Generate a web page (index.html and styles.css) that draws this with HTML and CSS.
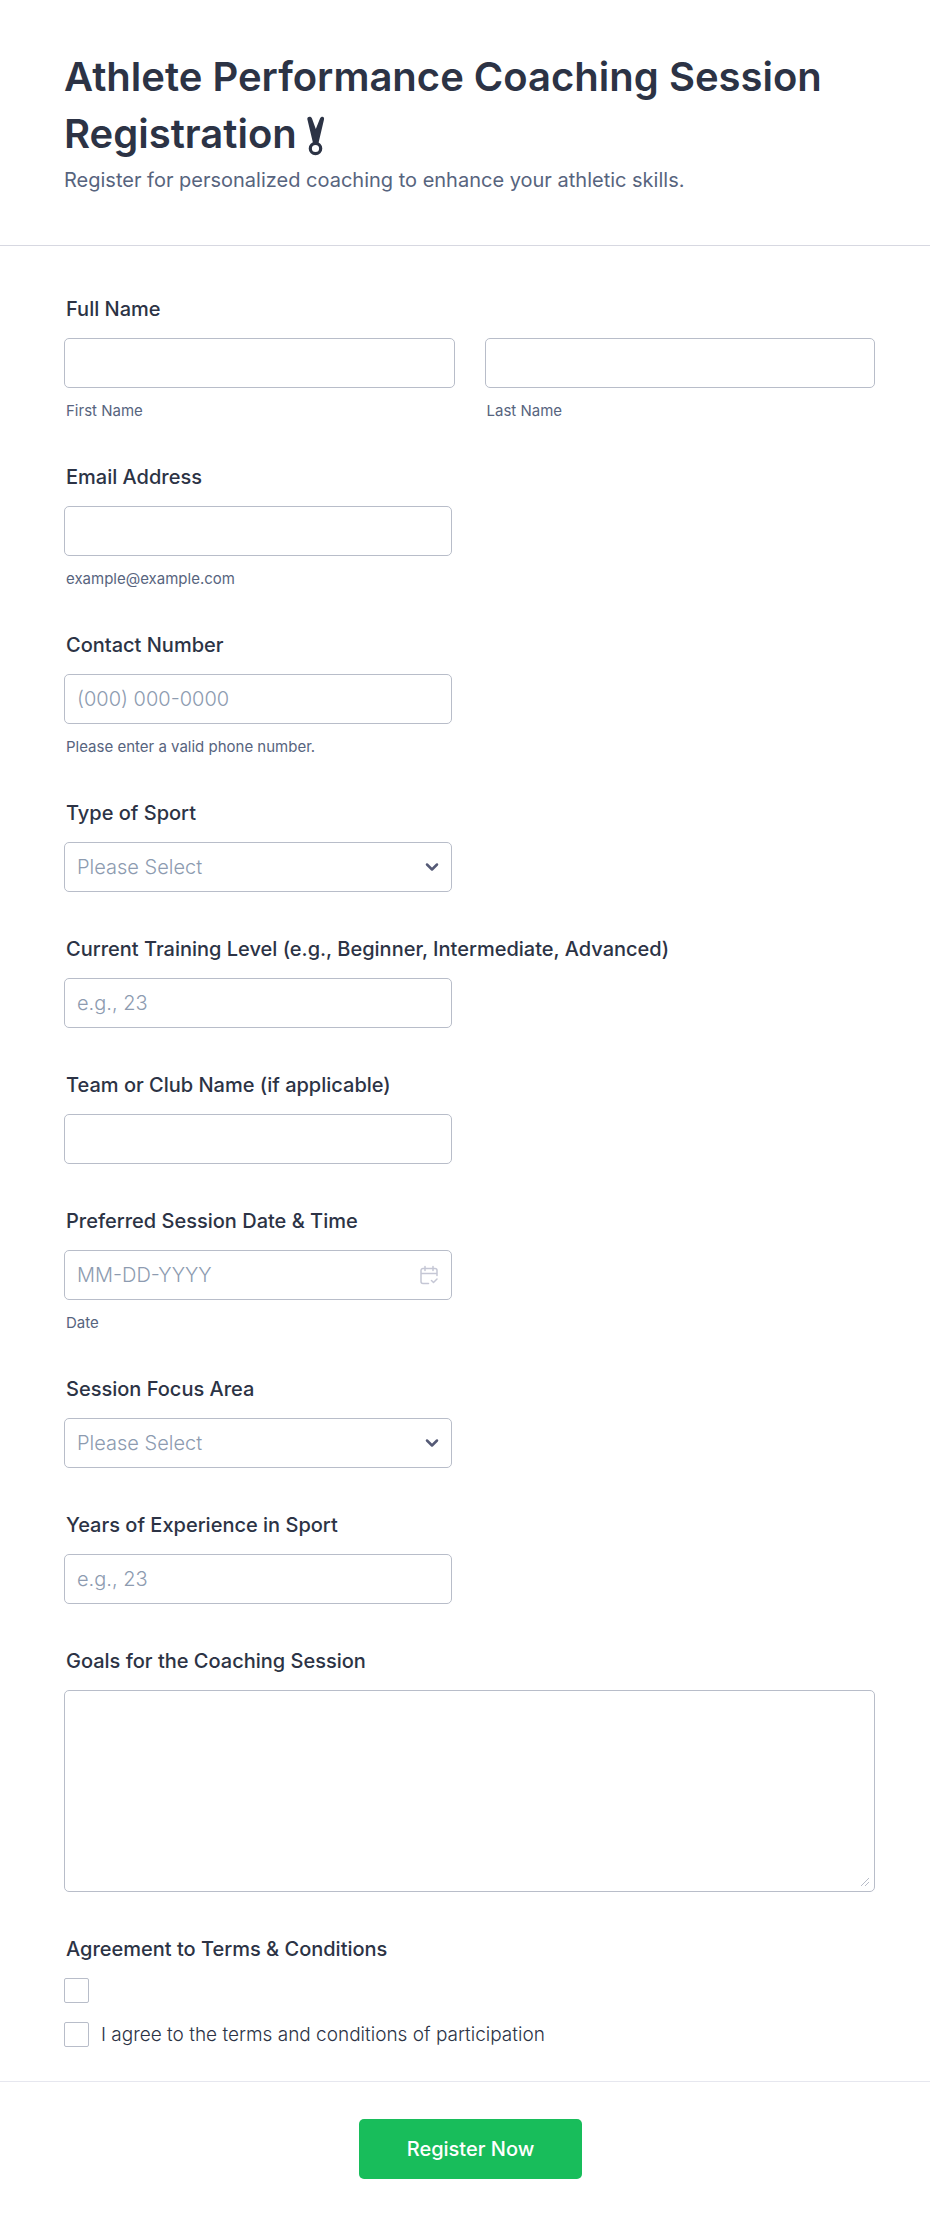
FILE: index.html
```html
<!DOCTYPE html>
<html lang="en">
<head>
  <meta charset="UTF-8">
  <meta name="viewport" content="width=device-width, initial-scale=1.0">
  <title>Athlete Performance Coaching Session Registration</title>
  <link rel="stylesheet" href="styles.css">
</head>
<body>

  <form class="form" action="#" method="post">
    <!-- Header -->
    <header class="form-header">
      <h1>Athlete Performance Coaching Session Registration
        <svg class="medal" viewBox="0 0 18 40" aria-hidden="true">
          <path d="M0.300 3C0.300 0 4.300 0 5 2.500L8.800 13L13 2.500C14 0 17.800 0 17 3.500L11.500 27H6Z" fill="currentColor"/>
          <circle cx="8.500" cy="32.500" r="5.200" fill="none" stroke="currentColor" stroke-width="3.200"/>
        </svg>
      </h1>
      <p>Register for personalized coaching to enhance your athletic skills.</p>
    </header>

    <!-- Questions -->
    <main class="questions">
      <fieldset class="question">
        <legend class="label">Full Name</legend>
        <div class="name-row">
          <div>
            <input class="control" type="text" id="first-name" name="first_name">
            <label class="sublabel" for="first-name">First Name</label>
          </div>
          <div>
            <input class="control" type="text" id="last-name" name="last_name">
            <label class="sublabel" for="last-name">Last Name</label>
          </div>
        </div>
      </fieldset>

      <div class="question half">
        <label class="label" for="email">Email Address</label>
        <input class="control" type="email" id="email" name="email" aria-describedby="email-hint">
        <span class="sublabel" id="email-hint">example@example.com</span>
      </div>

      <div class="question half">
        <label class="label" for="phone">Contact Number</label>
        <input class="control" type="tel" id="phone" name="phone" placeholder="(000) 000-0000" aria-describedby="phone-hint">
        <span class="sublabel" id="phone-hint">Please enter a valid phone number.</span>
      </div>

      <div class="question half">
        <label class="label" for="sport">Type of Sport</label>
        <div class="control-wrap">
          <select class="control" id="sport" name="sport">
            <option value="">Please Select</option>
          </select>
          <svg class="chevron" viewBox="0 0 14 10" aria-hidden="true"><path d="M2 2.500L7 7.500L12 2.500"/></svg>
        </div>
      </div>

      <div class="question half">
        <label class="label" for="level">Current Training Level (e.g., Beginner, Intermediate, Advanced)</label>
        <input class="control" type="text" id="level" name="level" placeholder="e.g., 23">
      </div>

      <div class="question half">
        <label class="label" for="team">Team or Club Name (if applicable)</label>
        <input class="control" type="text" id="team" name="team">
      </div>

      <div class="question half">
        <label class="label" for="date">Preferred Session Date &amp; Time</label>
        <div class="control-wrap">
          <input class="control" type="text" id="date" name="date" placeholder="MM-DD-YYYY" aria-describedby="date-hint">
          <svg class="calendar" viewBox="0 0 18 20" aria-hidden="true">
            <path d="M8.500 18.500H3A2 2 0 0 1 1 16.500V5.500A2 2 0 0 1 3 3.500H15A2 2 0 0 1 17 5.500V10.500M1 8.500H17M5 1.500V5.500M13 1.500V5.500M11.500 15.500L13.500 17.500L17 14"/>
          </svg>
        </div>
        <span class="sublabel" id="date-hint">Date</span>
      </div>

      <div class="question half">
        <label class="label" for="focus">Session Focus Area</label>
        <div class="control-wrap">
          <select class="control" id="focus" name="focus">
            <option value="">Please Select</option>
          </select>
          <svg class="chevron" viewBox="0 0 14 10" aria-hidden="true"><path d="M2 2.500L7 7.500L12 2.500"/></svg>
        </div>
      </div>

      <div class="question half">
        <label class="label" for="years">Years of Experience in Sport</label>
        <input class="control" type="text" id="years" name="years" placeholder="e.g., 23">
      </div>

      <div class="question">
        <label class="label" for="goals">Goals for the Coaching Session</label>
        <div class="control-wrap">
          <textarea class="control" id="goals" name="goals"></textarea>
          <svg class="grip" viewBox="0 0 8 8" aria-hidden="true"><path d="M0 8L8 0M4 8L8 4"/></svg>
        </div>
      </div>

      <fieldset class="question">
        <legend class="label">Agreement to Terms &amp; Conditions</legend>
        <div class="check-list">
          <div class="check">
            <input type="checkbox" id="terms-blank" name="terms" value="" aria-label="Terms">
          </div>
          <div class="check">
            <input type="checkbox" id="terms-agree" name="terms" value="agree">
            <label for="terms-agree">I agree to the terms and conditions of participation</label>
          </div>
        </div>
      </fieldset>
    </main>

    <!-- Submit -->
    <footer class="form-footer">
      <button type="submit">Register Now</button>
    </footer>
  </form>

</body>
</html>
```

FILE: styles.css
```css
* {
  box-sizing: border-box;
}
body {
  margin: 0;
  background-color: #fff;
  color: #2c3345;
  font-family: Inter, "Liberation Sans", sans-serif;
  font-size: 20px;
}
/* Header styling */
.form-header {
  padding: 48px 55px 51px 64px;
  border-bottom: 1px solid #d7d8e1;
}
h1 {
  margin: 0;
  font-size: 40px;
  font-weight: 600;
  line-height: 57px;
}
.medal {
  width: 18px;
  height: 40px;
  vertical-align: -8px;
}
.form-header p {
  margin: 4px 0 0;
  color: #57647e;
  line-height: 28px;
}
/* Questions */
.questions {
  display: flex;
  flex-direction: column;
  gap: 43px;
  padding: 49px 55px 34px 64px;
}
.question {
  min-width: 0;
  margin: 0;
  padding: 0;
  border: none;
}
.label {
  display: block;
  margin-bottom: 15px;
  padding: 0 0 0 2px;
  font-weight: 500;
  line-height: 28px;
}
.half .control {
  max-width: 388px;
}
.name-row {
  display: grid;
  grid-template-columns: 1fr 1fr;
  gap: 30px;
}
.control-wrap {
  position: relative;
}
.half .control-wrap {
  max-width: 388px;
}
.control {
  display: block;
  width: 100%;
  height: 50px;
  padding: 0 12px;
  border: 1px solid #b8bdc9;
  border-radius: 5px;
  background-color: #fff;
  color: #2c3345;
  font-family: inherit;
  font-size: 20px;
  font-weight: 300;
}
.control::placeholder {
  color: #8d9bb0;
}
select.control {
  appearance: none;
  color: #8d9bb0;
}
textarea.control {
  height: 202px;
  padding: 12px;
  resize: none;
}
.sublabel {
  display: block;
  margin-top: 14px;
  padding-left: 2px;
  color: #57647e;
  font-size: 15px;
  line-height: 18px;
}
/* Icons laid over the controls */
.chevron,
.calendar,
.grip {
  position: absolute;
  fill: none;
  pointer-events: none;
}
.chevron {
  top: 20px;
  right: 13px;
  width: 14px;
  height: 10px;
  stroke: #555a76;
  stroke-width: 2.5;
  stroke-linecap: round;
  stroke-linejoin: round;
}
.calendar {
  top: 15px;
  right: 14px;
  width: 18px;
  height: 20px;
  stroke: #c5c7d5;
  stroke-width: 1.5;
  stroke-linecap: round;
  stroke-linejoin: round;
}
.grip {
  right: 6px;
  bottom: 6px;
  width: 8px;
  height: 8px;
  stroke: #b8bdc9;
}
/* Checkboxes */
.check-list {
  display: flex;
  flex-direction: column;
  gap: 19px;
}
.check {
  display: flex;
  align-items: center;
  gap: 12px;
  height: 25px;
}
.check input {
  appearance: none;
  width: 25px;
  height: 25px;
  margin: 0;
  border: 1px solid #b8bdc9;
  border-radius: 2px;
}
.check input:checked {
  background-color: #18bd5b;
}
.check label {
  font-size: 19px;
  font-weight: 300;
  line-height: 24px;
}
/* Submit button */
.form-footer {
  display: flex;
  justify-content: center;
  padding: 37px 53px 50px 64px;
  border-top: 1px solid #e6e7ef;
}
.form-footer button {
  height: 60px;
  padding: 0 48px;
  border: none;
  border-radius: 5px;
  background-color: #18bd5b;
  color: #fff;
  font-family: inherit;
  font-size: 20px;
  font-weight: 500;
  cursor: pointer;
}
```
